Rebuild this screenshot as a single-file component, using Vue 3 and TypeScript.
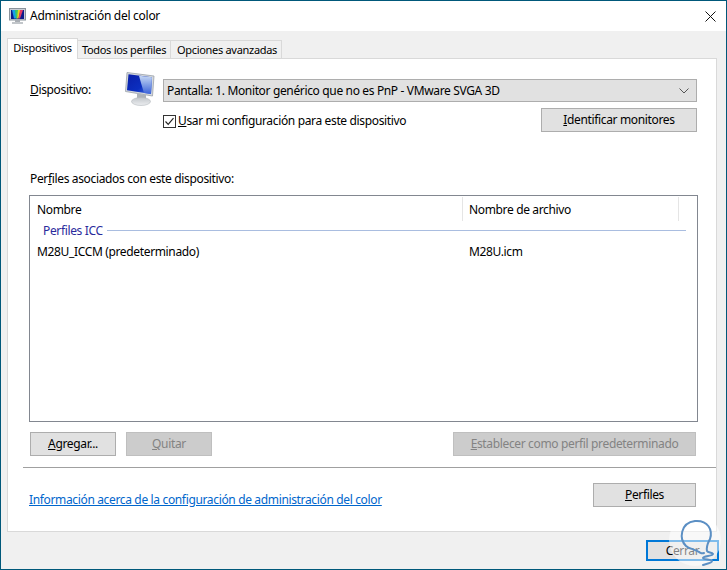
<script setup lang="ts">
const columns: string[] = ['Nombre', 'Nombre de archivo']
</script>

<template>
  <div class="win">
    <header class="titlebar">
      <svg class="title-icon" width="17" height="16" viewBox="0 0 17 16">
        <rect x="0.500" y="0.500" width="16" height="11.500" fill="#c9ced6" stroke="#8a939c" />
        <rect x="2" y="2" width="13" height="9" fill="#0d1a8a" />
        <path d="M3 2h3.500L8 10.500H5z" fill="#18a0e8" />
        <path d="M6 2h3L9 7 8 10.500H7z" fill="#3cc864" />
        <path d="M9 2h2.500L9.500 10.500H8z" fill="#e8d420" />
        <path d="M11 2h3L11 10.500H9.500z" fill="#e23a64" />
        <rect x="6" y="12" width="5" height="2" fill="#a8adb3" />
        <rect x="3" y="14" width="11" height="2" fill="#c2c6ca" />
      </svg>
      <span class="title-text">Administración del color</span>
      <svg class="close" width="11" height="11" viewBox="0 0 11 11">
        <path d="M0.500 0.500l10 10M10.500 0.500l-10 10" stroke="#111" stroke-width="1" fill="none" />
      </svg>
    </header>

    <main class="body">
      <nav class="tabs">
        <div class="tab active">Dispositivos</div>
        <div class="tab">Todos los perfiles</div>
        <div class="tab">Opciones avanzadas</div>
      </nav>

      <section class="panel">
        <div class="device">
          <label class="device-label"><u>D</u>ispositivo:</label>
          <svg class="monitor" width="30" height="34" viewBox="0 0 30 34">
            <defs>
              <linearGradient id="scr" x1="0" y1="0" x2="1" y2="1">
                <stop offset="0" stop-color="#0a1fa8" />
                <stop offset="0.6" stop-color="#0b2fc0" />
                <stop offset="1" stop-color="#4a78e0" />
              </linearGradient>
              <linearGradient id="scr2" x1="0" y1="0" x2="0" y2="1">
                <stop offset="0" stop-color="#c6d8f4" />
                <stop offset="1" stop-color="#3a62d8" />
              </linearGradient>
              <linearGradient id="base" x1="0" y1="0" x2="0" y2="1">
                <stop offset="0" stop-color="#c2c6cb" />
                <stop offset="1" stop-color="#eceef0" />
              </linearGradient>
            </defs>
            <path d="M2 0.500 29 4 27.500 24 0.500 19.500z" fill="#d4d8dd" stroke="#9aa1a9" stroke-width="0.800" />
            <path d="M3.500 2.300 27 5.300 26 22 2 18.200z" fill="url(#scr)" />
            <path d="M14 3.700 27 5.300 26 22 19 20.900 16 11z" fill="url(#scr2)" />
            <path d="M12 21.500 21 23 21 28 12 27z" fill="#aeb3b9" />
            <ellipse cx="16" cy="29.500" rx="9.500" ry="4" fill="url(#base)" stroke="#b4b8bd" stroke-width="0.600" />
          </svg>
          <div class="device-main">
            <div class="combo">
              <span>Pantalla: 1. Monitor genérico que no es PnP - VMware SVGA 3D</span>
              <svg width="10" height="6" viewBox="0 0 10 6">
                <path d="M0.500 0.500 5 5l4.500-4.500" fill="none" stroke="#555" stroke-width="1" />
              </svg>
            </div>
            <div class="device-options">
              <label class="check">
                <svg width="13" height="13" viewBox="0 0 13 13">
                  <rect x="0.500" y="0.500" width="12" height="12" fill="#fff" stroke="#333" />
                  <path d="M2.500 6.500 5.200 9.300 10.500 3.200" fill="none" stroke="#222" stroke-width="1.200" />
                </svg>
                <span><u>U</u>sar mi configuración para este dispositivo</span>
              </label>
              <button class="btn identify"><u>I</u>dentificar monitores</button>
            </div>
          </div>
        </div>

        <p class="assoc">Per<u>f</u>iles asociados con este dispositivo:</p>

        <div class="list">
          <div class="list-head">
            <div v-for="c in columns" :key="c" class="col">{{ c }}</div>
          </div>
          <div class="group">
            <span>Perfiles ICC</span>
            <i class="group-line"></i>
          </div>
          <div class="row">
            <div class="col-a">M28U_ICCM (predeterminado)</div>
            <div class="col-b">M28U.icm</div>
          </div>
        </div>

        <div class="actions">
          <button class="btn add"><u>A</u>gregar...</button>
          <button class="btn off remove"><u>Q</u>uitar</button>
          <button class="btn off set-default"><u>E</u>stablecer como perfil predeterminado</button>
        </div>

        <hr class="sep" />

        <div class="panel-foot">
          <a class="link">Información acerca de la configuración de administración del color</a>
          <button class="btn profiles"><u>P</u>erfiles</button>
        </div>
      </section>

      <footer class="foot">
        <button class="btn closebtn">Cerrar</button>
      </footer>
    </main>

    <svg class="mark" width="56" height="56" viewBox="0 0 56 56">
      <circle cx="28" cy="28" r="26" fill="#fff" fill-opacity="0.5" />
      <path
        d="M19 34C12 27 13 11 28 9c13-1 18 9 15 18-2 4-4 7-3 12 1 2 5 1 6 3 0 2-10 2-10 4 0 2 9 1 9 3 0 2-6 3-9 4M19 34c3 3 9 3 13 6 2 1 3 2 5 1"
        fill="none"
        stroke="#5b8fc4"
        stroke-width="2"
        stroke-linecap="round"
      />
    </svg>
  </div>
</template>

<style scoped>
.win {
  position: relative;
  width: 727px;
  height: 570px;
  box-sizing: border-box;
  border: 1px solid #00587a;
  display: flex;
  flex-direction: column;
  overflow: hidden;
  background: #fff;
  color: #000;
  font-family: "Noto Sans", "Open Sans", sans-serif;
  font-size: 12px;
  letter-spacing: -0.35px;
  line-height: 16px;
}
.titlebar {
  height: 30px;
  flex: none;
  display: flex;
  align-items: center;
  padding: 0 10px 0 8px;
  background: #fff;
}
.title-icon { flex: none; margin: -1px 4px 0 0; }
.title-text { flex: 1; letter-spacing: -0.28px; }
.close { flex: none; }
.body {
  flex: 1;
  min-height: 0;
  display: flex;
  flex-direction: column;
  background: #f0f0f0;
  padding: 7px 9px 0 6px;
}
.tabs {
  display: flex;
  align-items: flex-end;
  height: 21px;
  flex: none;
  position: relative;
  z-index: 1;
  margin-bottom: -1px;
}
.tab {
  box-sizing: border-box;
  height: 18px;
  margin-bottom: 1px;
  padding-top: 1px;
  background: #f0f0f0;
  border: 1px solid #d9d9d9;
  border-bottom: none;
  border-left: none;
  text-align: center;
  font-size: 11px;
  letter-spacing: -0.3px;
}
.tab:nth-child(2) { width: 93px; }
.tab:nth-child(3) { width: 111px; padding-left: 2px; }
.tab.active {
  width: 71px;
  height: 21px;
  margin-bottom: 0;
  background: #fff;
  border-left: 1px solid #d9d9d9;
  padding-top: 1px;
}
.panel {
  flex: 1;
  min-height: 0;
  background: #fff;
  border: 1px solid #d9d9d9;
  padding: 13px 18px 0 21px;
  display: flex;
  flex-direction: column;
}
.device { display: flex; align-items: flex-start; }
.device-label {
  width: 96px;
  flex: none;
  padding: 10px 0 0 1px;
  box-sizing: border-box;
}
.monitor { flex: none; margin-right: 8px; }
.device-main { flex: 1; padding-top: 7px; }
.combo {
  box-sizing: border-box;
  height: 23px;
  display: flex;
  align-items: center;
  justify-content: space-between;
  background: #e1e1e1;
  border: 1px solid #adadad;
  padding: 0 7px 0 3px;
  margin-right: 1px;
}
.device-options {
  display: flex;
  justify-content: space-between;
  align-items: flex-start;
  margin-top: 6px;
  margin-right: 1px;
}
.check {
  display: flex;
  align-items: center;
  gap: 2px;
  margin-top: 5px;
}
.btn {
  box-sizing: border-box;
  height: 24px;
  padding: 0;
  background: #e1e1e1;
  border: 1px solid #adadad;
  font: inherit;
  letter-spacing: inherit;
  color: #000;
}
.btn.off {
  background: #ccc;
  border-color: #bfbfbf;
  color: #838383;
}
.identify { width: 156px; }
.assoc { margin: 39px 0 8px 1px; }
.list {
  height: 227px;
  flex: none;
  box-sizing: border-box;
  border: 1px solid #828790;
  background: #fff;
}
.list-head {
  display: flex;
  padding-top: 1px;
  height: 24px;
}
.col {
  box-sizing: border-box;
  border-right: 1px solid #e5e5e5;
  padding: 5px 0 0 6px;
}
.col:nth-child(1) { width: 433px; padding-left: 7px; }
.col:nth-child(2) { width: 216px; }
.group {
  display: flex;
  align-items: center;
  height: 17px;
  margin: 1px 11px 0 13px;
  color: #2a2a9c;
}
.group-line {
  flex: 1;
  height: 1px;
  margin-left: 4px;
  background: #a9bde0;
}
.row {
  display: flex;
  margin-top: 4px;
  height: 18px;
  line-height: 18px;
}
.col-a { width: 433px; padding-left: 7px; box-sizing: border-box; }
.col-b { padding-left: 6px; }
.actions {
  display: flex;
  margin: 10px 2px 0 1px;
}
.add, .remove { width: 86px; }
.remove { margin-left: 10px; }
.set-default { width: 243px; margin-left: auto; }
.sep {
  height: 1px;
  border: none;
  background: #a0a0a0;
  margin: 11px -18px 0 -6px;
  flex: none;
}
.panel-foot {
  display: flex;
  align-items: center;
  justify-content: space-between;
  margin: 13px 2px 0 0;
}
.link {
  color: #0066cc;
  text-decoration: underline;
  margin-top: 11px;
}
.profiles { width: 103px; }
.foot {
  flex: none;
  height: 37px;
  display: flex;
  justify-content: flex-end;
  align-items: flex-start;
  padding-top: 8px;
  box-sizing: border-box;
  margin-right: -2px;
}
.closebtn {
  width: 73px;
  height: 21px;
  border: 2px solid #0078d7;
  line-height: 15px;
}
.mark {
  position: absolute;
  right: 3px;
  bottom: 1px;
  pointer-events: none;
}
u { text-underline-offset: 1px; }
</style>
